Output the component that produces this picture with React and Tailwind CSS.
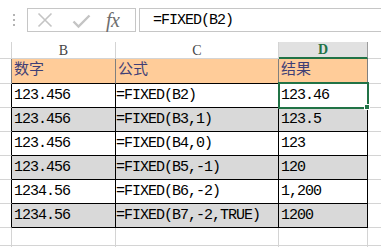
import React from "react";

const rows = [
  { num: "123.456", formula: "=FIXED(B2)", result: "123.46", shaded: false },
  { num: "123.456", formula: "=FIXED(B3,1)", result: "123.5", shaded: true },
  { num: "123.456", formula: "=FIXED(B4,0)", result: "123", shaded: false },
  { num: "123.456", formula: "=FIXED(B5,-1)", result: "120", shaded: true },
  { num: "1234.56", formula: "=FIXED(B6,-2)", result: "1,200", shaded: false },
  { num: "1234.56", formula: "=FIXED(B7,-2,TRUE)", result: "1200", shaded: true },
];

const cellFont = {
  fontFamily: '"Liberation Mono", "Noto Sans CJK SC", monospace',
};

const headFont = {
  fontFamily: '"Liberation Serif", serif',
};

const App = () => {
  return (
    <div className="relative w-[381px] h-[247px] bg-white overflow-hidden">
      {/* formula bar */}
      <div className="flex h-[42px] pt-[8px]">
        <div className="w-[27px] flex justify-center">
          <div className="flex flex-col gap-[3px] pt-[6px] pl-[1px]">
            <span className="w-[2px] h-[2px] bg-[#b4b4b4]" />
            <span className="w-[2px] h-[2px] bg-[#b4b4b4]" />
            <span className="w-[2px] h-[2px] bg-[#b4b4b4]" />
          </div>
        </div>
        <div className="w-[109px] h-[24px] border border-[#c6c6c6] flex items-center">
          <svg width="16" height="16" viewBox="0 0 16 16" className="ml-[9px]">
            <path d="M1.5 1.5 L14.5 14.5 M14.5 1.5 L1.5 14.5" stroke="#c4c4c4" strokeWidth="1.6" fill="none" />
          </svg>
          <svg width="19" height="16" viewBox="0 0 19 16" className="ml-[19px] mt-[2px]">
            <path d="M1.5 8.5 L6.5 13.5 L17.5 2.5" stroke="#c4c4c4" strokeWidth="2.4" fill="none" />
          </svg>
          <span
            className="ml-[15px] text-[20px] italic text-[#6e6e6e] leading-none tracking-[-0.5px]"
            style={headFont}
          >
            fx
          </span>
        </div>
        <div className="ml-[3px] flex-1 h-[24px] border border-r-0 border-[#c6c6c6] flex items-center pl-[13px]">
          <span className="text-[15px] tracking-[-1px] text-black leading-none" style={cellFont}>
            =FIXED(B2)
          </span>
        </div>
      </div>

      {/* sheet grid */}
      <div className="grid grid-cols-[12px_104px_163px_89px_1fr]" style={cellFont}>
        {/* column headers */}
        <div className="h-[17px] border-r border-b border-[#d4d4d4]" />
        <div className="h-[17px] border-r border-b border-[#d4d4d4] flex items-center justify-center text-[14px] text-[#444]" style={headFont}>
          B
        </div>
        <div className="h-[17px] border-r border-b border-[#d4d4d4] flex items-center justify-center text-[14px] text-[#444]" style={headFont}>
          C
        </div>
        <div className="h-[17px] bg-[#e1e1e1] border-r border-r-[#9b9b9b] border-b-2 border-b-[#217346] flex items-center justify-center text-[14px] font-bold text-[#217346]" style={headFont}>
          D
        </div>
        <div className="h-[17px] border-b border-[#d4d4d4]" />

        {/* orange title row */}
        <div className="h-[25px] border-r border-r-[#7f7f7f] border-b border-b-[#d4d4d4]" />
        <div className="h-[25px] bg-[#ffcc99] border-r border-r-[#7f7f7f] border-b border-b-black flex items-center pl-[2px] text-[15px] text-[#3f3f76]">
          数字
        </div>
        <div className="h-[25px] bg-[#ffcc99] border-r border-r-[#7f7f7f] border-b border-b-black flex items-center pl-[2px] text-[15px] text-[#3f3f76]">
          公式
        </div>
        <div className="h-[25px] bg-[#ffcc99] border-r border-r-[#7f7f7f] border-b border-b-black flex items-center pl-[2px] text-[15px] text-[#3f3f76]">
          结果
        </div>
        <div className="h-[25px] border-b border-[#d4d4d4]" />

        {rows.map((r, i) => {
          const bg = r.shaded ? "bg-[#d9d9d9]" : "bg-white";
          return (
            <React.Fragment key={i}>
              <div className="h-[24px] border-r border-r-black border-b border-b-[#d4d4d4]" />
              <div className={`h-[24px] ${bg} border-r border-b border-black flex items-center pl-[2px] pt-[2px] text-[15px] tracking-[-1px] text-black`}>
                {r.num}
              </div>
              <div className={`h-[24px] ${bg} border-r border-b border-black flex items-center pt-[2px] text-[15px] tracking-[-1px] text-black`}>
                {r.formula}
              </div>
              <div className={`h-[24px] ${bg} border-r border-b border-black flex items-center pl-[2px] pt-[2px] text-[15px] tracking-[-1px] text-black`}>
                {r.result}
              </div>
              <div className="h-[24px] border-b border-[#d4d4d4]" />
            </React.Fragment>
          );
        })}

        {/* empty rows */}
        {[0, 1].map((k) => (
          <React.Fragment key={k}>
            <div className="h-[18px] border-r border-b border-[#d4d4d4]" />
            <div className="h-[18px] border-r border-b border-[#d4d4d4]" />
            <div className="h-[18px] border-r border-b border-[#d4d4d4]" />
            <div className="h-[18px] border-r border-b border-[#d4d4d4]" />
            <div className="h-[18px] border-b border-[#d4d4d4]" />
          </React.Fragment>
        ))}
      </div>

      {/* active cell D2 */}
      <div className="absolute left-[278px] top-[82px] w-[91px] h-[27px] border-2 border-[#217346]" />
      <div className="absolute left-[364px] top-[104px] w-[6px] h-[6px] bg-[#217346] border border-white" />
    </div>
  );
};

export default App;
